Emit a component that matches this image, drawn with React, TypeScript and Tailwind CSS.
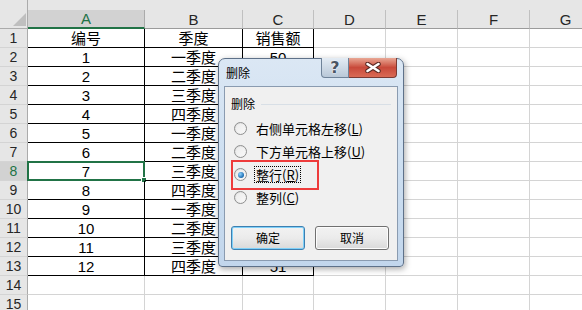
import React from "react";

const font = "font-['Liberation_Sans','Noto_Sans_CJK_SC',sans-serif]";
const uiFont = "font-['Noto_Sans_CJK_SC','Liberation_Sans',sans-serif]";

const colLetters = ["A", "B", "C", "D", "E", "F", "G"];
const colWidths = [
  "w-[117px]",
  "w-[98px]",
  "w-[71px]",
  "w-[72px]",
  "w-[72px]",
  "w-[72px]",
  "w-[72px]",
];

const quarters = ["一季度", "二季度", "三季度", "四季度"];

const rows: string[][] = [["编号", "季度", "销售额"]];
for (let i = 1; i <= 12; i++) {
  rows.push([String(i), quarters[(i - 1) % 4], i === 1 ? "50" : i === 12 ? "51" : ""]);
}

function HeaderRow() {
  return (
    <div className="flex h-[29px] shrink-0">
      <div className="relative w-[28px] shrink-0 bg-[#e6e6e6] border-r border-b border-[#ababab]">
        <svg className="absolute right-[1px] bottom-[2px]" width="13" height="13" viewBox="0 0 13 13">
          <polygon points="13,0 13,13 0,13" fill="#bfbfbf" />
        </svg>
      </div>
      {colLetters.map((c, i) => (
        <div key={c} className={`${colWidths[i]} shrink-0 flex flex-col bg-[#e6e6e6]`}>
          <div className="h-[10px]" />
          {i === 0 ? (
            <div className="flex-1 flex items-center justify-center bg-[#d2d2d2] border-r border-[#ababab] border-b-2 border-b-[#217346] text-[#217346] text-[15px] leading-none">
              {c}
            </div>
          ) : (
            <div className="flex-1 flex items-center justify-center border-r border-[#c0c0c0] border-b border-b-[#9b9b9b] text-[#262626] text-[15px] leading-none">
              {c}
            </div>
          )}
        </div>
      ))}
    </div>
  );
}

function DataRow({ n, cells }: { n: number; cells: string[] }) {
  const selected = n === 8;
  const inTable = n <= 13;
  return (
    <div className="flex h-[19px] shrink-0">
      <div
        className={`w-[28px] shrink-0 flex items-center justify-center border-r border-r-[#ababab] border-b border-b-[#d4d4d4] text-[14px] leading-none ${
          selected ? "bg-[#d2d2d2] text-[#217346]" : "bg-[#e6e6e6] text-[#262626]"
        }`}
      >
        {n}
      </div>
      {colLetters.map((c, i) => {
        const black = inTable && i < 3;
        return (
          <div
            key={c}
            className={`${colWidths[i]} shrink-0 relative flex items-center justify-center border-r border-b text-[15px] leading-none text-black ${
              black ? "border-black" : "border-[#d4d4d4]"
            }`}
          >
            {cells[i] ?? ""}
            {selected && i === 0 && (
              <div className="absolute -left-[1px] -top-[1px] -right-[1px] -bottom-[1px] border-2 border-[#217346]">
                <div className="absolute -right-[4px] -bottom-[4px] w-[6px] h-[6px] bg-[#217346] border border-white" />
              </div>
            )}
          </div>
        );
      })}
    </div>
  );
}

function Radio({ checked }: { checked?: boolean }) {
  return (
    <div className="w-[13px] h-[13px] shrink-0 rounded-full border border-[#8e8f8f] bg-gradient-to-br from-[#dcdcdc] to-[#fbfbfb] flex items-center justify-center">
      <div className="w-[9px] h-[9px] rounded-full bg-gradient-to-br from-[#ececec] to-[#f8f8f8] flex items-center justify-center">
        {checked && (
          <div className="w-[6px] h-[6px] rounded-full bg-[radial-gradient(circle_at_35%_35%,#8fd3ff,#1a6bb0_70%)]" />
        )}
      </div>
    </div>
  );
}

function Option({
  label,
  accel,
  checked,
  focus,
}: {
  label: string;
  accel: string;
  checked?: boolean;
  focus?: boolean;
}) {
  return (
    <div className="flex items-center h-[23px] pl-[9px]">
      <Radio checked={checked} />
      <span
        className={`ml-[8px] text-[13px] leading-[15px] text-black px-[1px] ${
          focus ? "outline outline-1 outline-dotted outline-black" : ""
        }`}
      >
        {label}(<span className="underline">{accel}</span>)
      </span>
    </div>
  );
}

function Dialog() {
  return (
    <div
      className={`absolute left-[218px] top-[58px] w-[186px] h-[209px] rounded-t-[7px] rounded-b-[4px] border border-[#5e7189] bg-gradient-to-b from-[#dbe7f4] via-[#cddff1] to-[#c2d6ec] shadow-[1px_2px_6px_rgba(0,0,0,0.35)] flex flex-col ${uiFont}`}
    >
      <div className="relative h-[27px] shrink-0 flex items-center pl-[7px] text-[12px] text-black">
        删除
        <div className="absolute -top-[1px] right-[6px] flex h-[20px]">
          <div className="w-[28px] h-full rounded-bl-[4px] border border-t-0 border-[#6f8399] bg-gradient-to-b from-[#e4ecf4] to-[#b9c8d8] flex items-center justify-center text-[16px] font-bold leading-none text-[#4a5563] font-['DejaVu_Sans',sans-serif] [text-shadow:0_0_2px_#fff,0_0_1px_#fff]">
            ?
          </div>
          <div className="w-[48px] h-full rounded-br-[4px] border border-t-0 border-l-0 border-[#7a3a33] bg-gradient-to-b from-[#e8a795] via-[#c8493a] to-[#d96a55] flex items-center justify-center">
            <svg width="18" height="11" viewBox="0 0 18 11">
              <path d="M3.5 2 L14.5 9 M14.5 2 L3.5 9" stroke="#5a2a24" strokeWidth="4.5" strokeLinecap="round" />
              <path d="M3.5 2 L14.5 9 M14.5 2 L3.5 9" stroke="#ffffff" strokeWidth="2.6" strokeLinecap="round" />
            </svg>
          </div>
        </div>
      </div>
      <div className="relative mx-[5px] mb-[5px] flex-1 border border-[#8a9bb0] bg-[#f0f0f0] flex flex-col">
        <div className="flex items-center pt-[10px] pl-[6px] pr-[6px] h-[24px]">
          <span className="text-[12px] leading-[14px] text-black">删除</span>
          <div className="ml-[6px] flex-1 h-px bg-[#d8dfe6]" />
        </div>
        <div className="mt-[6px] flex flex-col">
          <Option label="右侧单元格左移" accel="L" />
          <Option label="下方单元格上移" accel="U" />
          <Option label="整行" accel="R" checked focus />
          <Option label="整列" accel="C" />
        </div>
        <div className="mt-[17px] pl-[6px] flex gap-[10px]">
          <div className="w-[74px] h-[24px] rounded-[3px] border border-[#3c7fb1] shadow-[inset_0_0_0_1px_#7fd0f8] bg-gradient-to-b from-[#f2f2f2] via-[#ebebeb] to-[#d9d9d9] flex items-center justify-center text-[12px] text-black">
            确定
          </div>
          <div className="w-[74px] h-[24px] rounded-[3px] border border-[#707070] shadow-[inset_0_0_0_1px_#fcfcfc] bg-gradient-to-b from-[#f2f2f2] via-[#ebebeb] to-[#d9d9d9] flex items-center justify-center text-[12px] text-black">
            取消
          </div>
        </div>
        <div className="absolute left-[6px] top-[73px] w-[88px] h-[30px] border-2 border-[#ee3b3b]" />
      </div>
    </div>
  );
}

export default function App() {
  return (
    <div className={`relative w-[582px] h-[310px] overflow-hidden bg-white ${font}`}>
      <div className="flex flex-col">
        <HeaderRow />
        {Array.from({ length: 15 }).map((_, idx) => (
          <DataRow key={idx} n={idx + 1} cells={rows[idx] ?? []} />
        ))}
      </div>
      <Dialog />
    </div>
  );
}
